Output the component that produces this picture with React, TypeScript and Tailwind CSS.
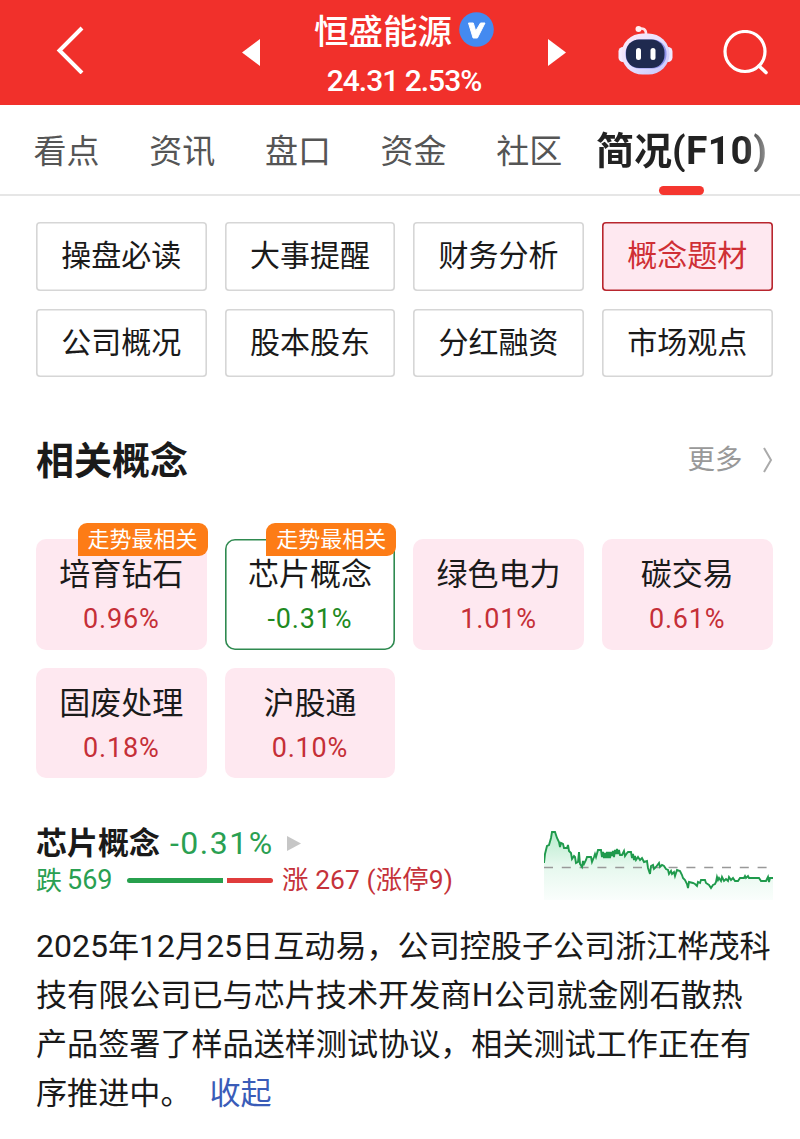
import clsx from "clsx";

type Concept = {
  name: string;
  change: string;
  hot?: boolean;
  selected?: boolean;
};

const tabs = ["看点", "资讯", "盘口", "资金", "社区"];

const sections = [
  "操盘必读",
  "大事提醒",
  "财务分析",
  "概念题材",
  "公司概况",
  "股本股东",
  "分红融资",
  "市场观点",
];

const concepts: Concept[] = [
  { name: "培育钻石", change: "0.96%", hot: true },
  { name: "芯片概念", change: "-0.31%", hot: true, selected: true },
  { name: "绿色电力", change: "1.01%" },
  { name: "碳交易", change: "0.61%" },
  { name: "固废处理", change: "0.18%" },
  { name: "沪股通", change: "0.10%" },
];

const trend =
  "0,33 1,24 3,16 5,15 7,8 8,2 11,2 13,8 15,12 16,17 17,13 19,14 20,18 23,18 24,15 25,21 27,23 28,29 30,26 31,27 32,33 34,32 35,22 36,34 38,37 39,31 40,34 42,30 43,27 47,27 48,32 50,27 51,24 52,27 54,20 57,20 58,27 59,22 60,28 61,23 62,28 63,22 64,28 65,22 66,28 67,22 68,26 69,21 70,27 71,20 72,24 73,19 74,24 75,20 76,25 78,25 80,21 81,26 83,23 84,22 87,22 88,28 89,24 90,30 91,26 92,30 94,27 96,30 98,28 100,32 103,31 104,38 106,44 107,36 109,35 110,39 112,37 115,33 116,37 118,35 120,36 122,39 124,40 125,44 127,41 128,44 130,42 131,46 133,40 136,41 138,45 139,48 141,50 143,54 144,58 145,52 149,53 151,54 153,56 154,52 156,53 157,50 161,50 162,53 165,55 167,58 169,55 171,54 172,52 173,47 174,50 175,48 177,51 178,47 180,51 182,49 184,51 185,47 187,50 189,48 191,51 194,51 196,48 200,48 201,46 202,48 204,46 205,48 215,48 217,51 222,51 224,47 225,52 226,48 229,48";

const BackIcon = () => (
  <svg width="28" height="48" viewBox="0 0 28 48" fill="none">
    <path d="M26 2 L3.5 24.5 L26 47" stroke="white" strokeWidth="4" />
  </svg>
);

const VerifiedIcon = () => (
  <svg width="35" height="35" viewBox="0 0 35 35">
    <circle cx="17.5" cy="17.5" r="17.3" fill="#448af0" />
    <path
      d="M9.5 11h4.8l2.4 8L21.5 11H26l-7.6 15h-4.3z"
      fill="white"
      stroke="white"
      strokeLinejoin="round"
    />
  </svg>
);

const RobotIcon = () => (
  <svg width="56" height="52" viewBox="0 0 56 52">
    <defs>
      <linearGradient id="shell" x1="0" y1="0" x2="1" y2="1">
        <stop offset="0" stopColor="#ffe9f4" />
        <stop offset="0.5" stopColor="#e6e0ff" />
        <stop offset="1" stopColor="#c3c4fb" />
      </linearGradient>
    </defs>
    <path
      d="M20 5c5-1.5 8.5 0 8 6"
      stroke="#ffe3ea"
      strokeWidth="2.6"
      fill="none"
    />
    <circle cx="20.5" cy="5" r="3" fill="#fff0f4" />
    <rect x="0.5" y="23" width="9" height="15" rx="4.5" fill="#f5ecff" />
    <rect x="45.5" y="23" width="9" height="15" rx="4.5" fill="#efe8ff" />
    <rect x="3.5" y="9.5" width="48" height="41" rx="21" fill="url(#shell)" />
    <rect x="7.5" y="15.5" width="41" height="29" rx="14" fill="#8e92ea" />
    <rect x="8" y="15.5" width="38.5" height="28.5" rx="13" fill="#1f2a4f" />
    <rect x="18" y="24" width="5" height="12" rx="2.5" fill="white" />
    <rect x="32.5" y="24" width="5" height="12" rx="2.5" fill="white" />
  </svg>
);

const SearchIcon = () => (
  <svg width="46" height="46" viewBox="0 0 46 46" fill="none">
    <circle cx="22" cy="21.5" r="20" stroke="white" strokeWidth="3.2" />
    <path
      d="M36 36 L43 42.5"
      stroke="white"
      strokeWidth="3.6"
      strokeLinecap="round"
    />
  </svg>
);

const TrendChart = () => (
  <svg width="230" height="72" viewBox="0 0 230 72" fill="none">
    <defs>
      <linearGradient id="fade" x1="0" y1="0" x2="0" y2="1">
        <stop offset="0" stopColor="#b9ecce" />
        <stop offset="0.5" stopColor="#e6f8ee" />
        <stop offset="1" stopColor="#fafefc" />
      </linearGradient>
    </defs>
    <polygon points={`0,70 ${trend} 229,70`} fill="url(#fade)" />
    <path
      d="M0 37.5H229"
      stroke="#999"
      strokeWidth="1.5"
      strokeDasharray="9 8.8"
    />
    <polyline points={trend} stroke="#1f9a4c" strokeWidth="1.9" />
  </svg>
);

const Header = () => (
  <header className="flex h-[105px] bg-[#f1302b] text-white">
    <div className="w-[242px] pt-[26px] pl-14">
      <BackIcon />
    </div>
    <svg className="mt-[39px]" width="18" height="27" viewBox="0 0 18 27">
      <path d="M18 0V27L0 13.5z" fill="white" />
    </svg>
    <div className="flex w-[288px] flex-col items-center">
      <div className="mt-[5px] flex h-[48px] items-center gap-[7px]">
        <h1 className="text-[34.5px] leading-[43px] font-medium">恒盛能源</h1>
        <VerifiedIcon />
      </div>
      <div className="mt-[8px] font-[Roboto,sans-serif] text-[30px] leading-[40px] font-medium tracking-[-1px]">
        24.31 2.53%
      </div>
    </div>
    <svg className="mt-[39px]" width="18" height="27" viewBox="0 0 18 27">
      <path d="M0 0V27L18 13.5z" fill="white" />
    </svg>
    <div className="mt-[24px] ml-[52px]">
      <RobotIcon />
    </div>
    <div className="mt-[30px] ml-[49px]">
      <SearchIcon />
    </div>
  </header>
);

const TabBar = () => (
  <nav className="flex h-[91px] items-start border-b-2 border-[#e6e6e6] pl-[33.5px] text-[#555]">
    {tabs.map((tab) => (
      <div
        key={tab}
        className="w-[115.7px] shrink-0 pt-[20px] text-[33px] leading-[48px] whitespace-nowrap"
      >
        {tab}
      </div>
    ))}
    <div className="-ml-[16px] flex h-[90px] shrink-0 flex-col items-center justify-between pt-[19px] text-[38px] leading-[48px] font-bold">
      <span className="bg-linear-to-r from-[#222] from-86% to-[#999] bg-clip-text whitespace-nowrap text-transparent">
        简况
        <span className="font-[Roboto,sans-serif] text-[39px] leading-none tracking-[0.4px]">
          (F10)
        </span>
      </span>
      <span className="h-[9px] w-[45px] rounded-full bg-[#f5362f]" />
    </div>
  </nav>
);

const ConceptCard = ({ name, change, hot, selected }: Concept) => (
  <div
    className={clsx(
      "relative flex h-[110.5px] flex-col items-center rounded-[10px] pt-[17px]",
      selected
        ? "bg-white shadow-[inset_0_0_0_1.6px_#2f8a50]"
        : "bg-[#fee8f0]"
    )}
  >
    <span className="text-[31px] leading-[32px]">{name}</span>
    <span
      className={clsx(
        "mt-[11px] font-[Roboto,sans-serif] text-[27px] leading-[40px] tracking-[0.8px]",
        change.startsWith("-") ? "text-[#1f8a1f]" : "text-[#c52f37]"
      )}
    >
      {change}
    </span>
    {hot && (
      <span className="absolute -top-[16px] -right-px h-[33px] w-[130px] rounded-[9px] rounded-bl-none bg-[#fd7c16] text-center text-[22px] leading-[29px] text-white">
        走势最相关
      </span>
    )}
  </div>
);

export default function App() {
  return (
    <main className="h-[1139px] w-[800px] overflow-hidden bg-white font-['Noto_Sans_CJK_SC',sans-serif] text-[#1a1a1a]">
      <Header />
      <TabBar />

      <div className="pr-[27.5px] pl-9">
        <div className="grid grid-cols-4 gap-x-[18px] gap-y-[18px] pt-[26px]">
          {sections.map((section) => (
            <div
              key={section}
              className={clsx(
                "h-[68.5px] rounded-[4px] text-center text-[30px] leading-[63px]",
                section === "概念题材"
                  ? "bg-[#fee8f0] text-[#cf2f35] shadow-[inset_0_0_0_1.6px_#b8262e]"
                  : "shadow-[inset_0_0_0_1.6px_#d6d6d6]"
              )}
            >
              {section}
            </div>
          ))}
        </div>

        <div className="mt-[51px] flex h-[60px] items-center justify-between">
          <h2 className="text-[38px] leading-[58px] font-bold">相关概念</h2>
          <div className="flex items-center gap-5 text-[27.5px] text-[#999]">
            更多
            <svg
              className="mt-[4px]"
              width="10"
              height="26"
              viewBox="0 0 10 26"
              fill="none"
            >
              <path d="M1 1 L8 13 L1 25" stroke="#aaa" strokeWidth="2" />
            </svg>
          </div>
        </div>

        <div className="mt-[51px] grid grid-cols-4 gap-[18px]">
          {concepts.map((concept) => (
            <ConceptCard key={concept.name} {...concept} />
          ))}
        </div>

        <div className="mt-[42px] flex justify-between">
          <div>
            <div className="flex h-[42px] items-center text-[31px] leading-[42px]">
              <h3 className="font-bold">芯片概念</h3>
              <span className="mt-[4px] ml-[10px] font-[Roboto,sans-serif] text-[32px] tracking-[1.5px] text-[#2aa052]">
                -0.31%
              </span>
              <svg
                className="mt-[4px] ml-[13px]"
                width="14"
                height="15"
                viewBox="0 0 14 15"
              >
                <path d="M0 0V15L14 7.5z" fill="#c6c6c6" />
              </svg>
            </div>
            <div className="flex h-[36px] items-center text-[26px] leading-[34px]">
              <span className="-mt-[2px] text-[#2aa052]">跌</span>
              <span className="ml-[5px] w-[46px] font-[Roboto,sans-serif] text-[27px] text-[#2aa052]">
                569
              </span>
              <span className="ml-[14px] h-[5px] w-[96px] rounded-l-full bg-[#27a04d]" />
              <span className="ml-[4px] h-[5px] w-[46px] rounded-r-full bg-[#e03c3c]" />
              <span className="ml-[9px] font-[Roboto,'Noto_Sans_CJK_SC',sans-serif] text-[26.4px] tracking-[0.1px] text-[#c5323a]">
                涨 267 (涨停9)
              </span>
            </div>
          </div>
          <div className="mt-[10px] -mr-px">
            <TrendChart />
          </div>
        </div>

        <p className="mt-[17px] text-[31.1px] leading-[49px] whitespace-nowrap">
          <span className="font-[Roboto,sans-serif] text-[32px] leading-none">
            2025
          </span>
          年
          <span className="font-[Roboto,sans-serif] text-[32px] leading-none">
            12
          </span>
          月
          <span className="font-[Roboto,sans-serif] text-[32px] leading-none">
            25
          </span>
          日互动易，公司控股子公司浙江桦茂科
          <br />
          技有限公司已与芯片技术开发商H公司就金刚石散热
          <br />
          产品签署了样品送样测试协议，相关测试工作正在有
          <br />
          序推进中。
          <span className="ml-[18px] text-[#3a5cb8]">收起</span>
        </p>
      </div>
    </main>
  );
}
